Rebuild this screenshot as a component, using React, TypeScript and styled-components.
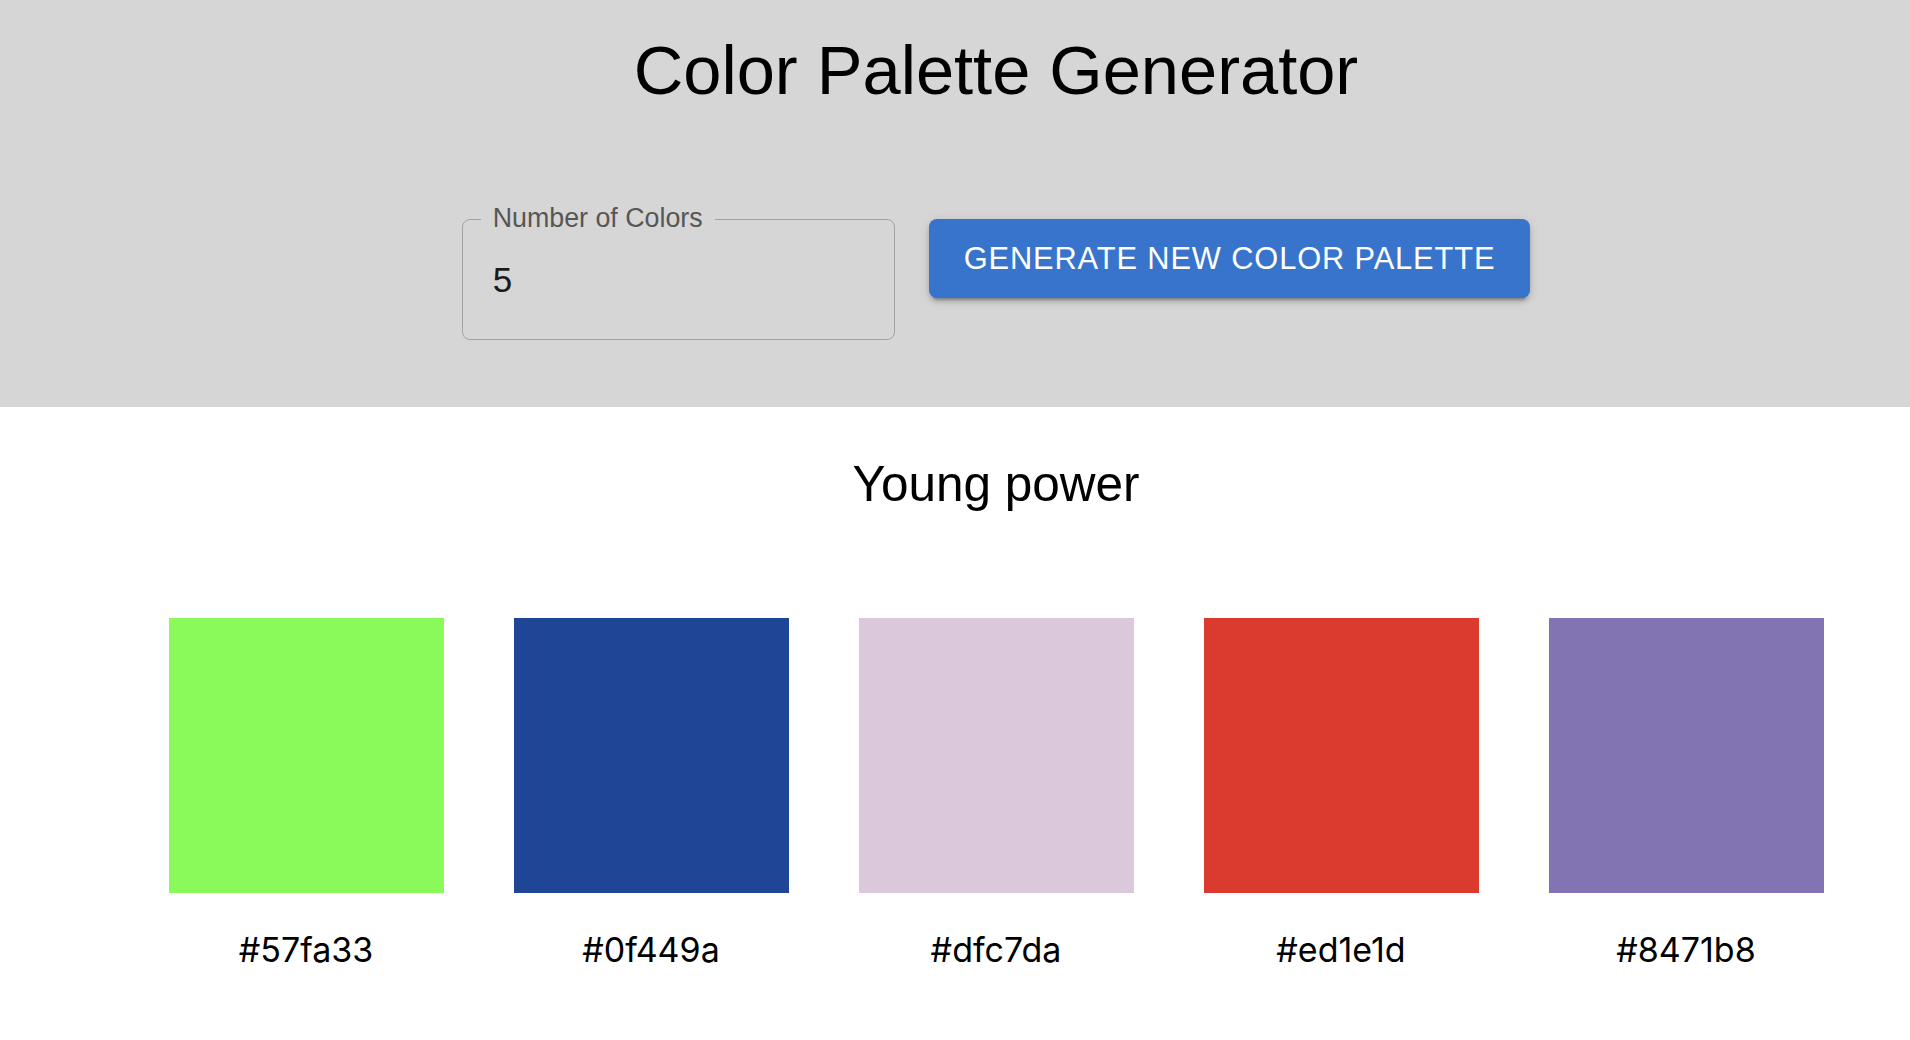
import React from "react";
import styled, { createGlobalStyle } from "styled-components";

const GlobalStyle = createGlobalStyle`
  html, body { margin: 0; padding: 0; background: #ffffff; }
  body { font-family: "Liberation Sans", Arial, sans-serif; }
  * { box-sizing: border-box; }
`;

const Page = styled.div`
  display: flex;
  flex-direction: column;
  width: 100%;
`;

const Header = styled.header`
  background: #d6d6d6;
  height: 407px;
  padding: 32px 0 0 82px;
  display: flex;
  flex-direction: column;
  align-items: center;
`;

const Title = styled.h1`
  margin: 0;
  font-family: "Liberation Sans", Arial, sans-serif;
  font-weight: 400;
  font-size: 68.6px;
  line-height: 78px;
  color: #000;
`;

const Controls = styled.div`
  margin-top: 109px;
  display: flex;
  align-items: flex-start;
  gap: 34px;
`;

const Field = styled.div`
  position: relative;
  width: 433px;
  height: 121px;
  border: 1px solid #a3a3a3;
  border-radius: 8px;
  display: flex;
  align-items: center;
`;

const FieldLabel = styled.label`
  position: absolute;
  top: -15px;
  left: 18px;
  padding: 0 12px;
  background: #d6d6d6;
  font-family: "Liberation Sans", Arial, sans-serif;
  font-size: 26.8px;
  line-height: 26px;
  color: #565656;
`;

const NumberInput = styled.input`
  width: 100%;
  height: 100%;
  border: none;
  outline: none;
  background: transparent;
  padding: 0 30px;
  font-family: "Liberation Sans", Arial, sans-serif;
  font-size: 35px;
  color: #1a1a1a;
`;

const GenerateButton = styled.button`
  height: 79px;
  padding: 0 35px;
  border: none;
  border-radius: 8px;
  background: #3874cc;
  color: #ffffff;
  font-family: "Liberation Sans", Arial, sans-serif;
  font-size: 30.8px;
  font-weight: 400;
  letter-spacing: 0.88px;
  text-transform: uppercase;
  cursor: pointer;
  box-shadow: 0 6px 2px -4px rgba(0, 0, 0, 0.2), 0 4px 4px 0 rgba(0, 0, 0, 0.14),
    0 2px 11px 0 rgba(0, 0, 0, 0.12);
`;

const PaletteSection = styled.section`
  padding: 48px 0 0 82px;
  display: flex;
  flex-direction: column;
  align-items: center;
`;

const PaletteName = styled.h2`
  margin: 0;
  font-family: "Liberation Sans", Arial, sans-serif;
  font-weight: 400;
  font-size: 49.5px;
  line-height: 57px;
  color: #000;
`;

const SwatchRow = styled.div`
  margin-top: 106px;
  display: flex;
  gap: 70px;
`;

const SwatchCard = styled.div`
  display: flex;
  flex-direction: column;
  align-items: center;
  gap: 35px;
`;

const Swatch = styled.div<{ $color: string }>`
  width: 275px;
  height: 275px;
  background: ${(p) => p.$color};
`;

const HexLabel = styled.span`
  font-family: Inter, "Noto Sans", sans-serif;
  font-size: 34px;
  line-height: 44px;
  color: #000;
`;

const palette = [
  { hex: "#57fa33", shown: "#8af95a" },
  { hex: "#0f449a", shown: "#1f4596" },
  { hex: "#dfc7da", shown: "#dbc8da" },
  { hex: "#ed1e1d", shown: "#db3a2e" },
  { hex: "#8471b8", shown: "#8273b3" },
];

export default function App() {
  return (
    <Page>
      <GlobalStyle />
      <Header>
        <Title>Color Palette Generator</Title>
        <Controls>
          <Field>
            <FieldLabel htmlFor="count">Number of Colors</FieldLabel>
            <NumberInput id="count" type="text" value="5" readOnly />
          </Field>
          <GenerateButton>Generate New Color Palette</GenerateButton>
        </Controls>
      </Header>
      <PaletteSection>
        <PaletteName>Young power</PaletteName>
        <SwatchRow>
          {palette.map((c) => (
            <SwatchCard key={c.hex}>
              <Swatch $color={c.shown} />
              <HexLabel>{c.hex}</HexLabel>
            </SwatchCard>
          ))}
        </SwatchRow>
      </PaletteSection>
    </Page>
  );
}
